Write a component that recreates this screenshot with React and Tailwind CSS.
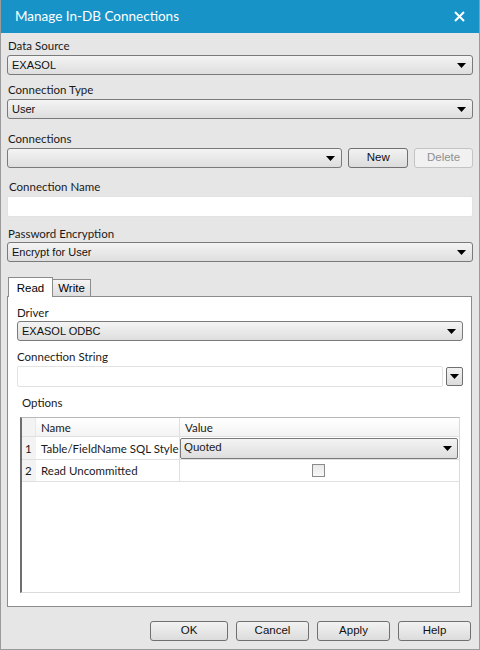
import React from "react";

const SEGOE = "font-['Lato','Open_Sans',sans-serif]";
const MS = "font-['Liberation_Sans',Arial,sans-serif]";

function Arrow() {
  return (
    <svg width="9" height="5" viewBox="0 0 9 5" className="shrink-0">
      <path d="M0 0 H9 L4.5 5 Z" fill="#000" />
    </svg>
  );
}

function Select({ value, className = "" }) {
  return (
    <div
      className={`h-[20px] flex items-center justify-between pl-[4px] pr-[6px] rounded-[3px] border border-[#7a7a7a] bg-[linear-gradient(#f4f4f4,#dedede)] text-[11px] text-[#111] ${MS} ${className}`}
    >
      <span className="leading-[14px]">{value}</span>
      <Arrow />
    </div>
  );
}

function Label({ children, className = "" }) {
  return (
    <div className={`h-[16px] leading-[16px] text-[11.5px] text-[#1a1a1a] ${SEGOE} ${className}`}>
      {children}
    </div>
  );
}

function Button({ children, className = "", disabled }) {
  return (
    <div
      className={`h-[20px] flex items-center justify-center rounded-[3px] border text-[11.5px] ${MS} ${
        disabled
          ? "border-[#c4c4c4] bg-[#f1f1f1] text-[#8f8f8f]"
          : "border-[#707070] bg-[linear-gradient(#f2f2f2,#dcdcdc)] text-[#111]"
      } ${className}`}
    >
      {children}
    </div>
  );
}

export default function App() {
  return (
    <div className="w-[480px] h-[650px] bg-[#e6e6e6] border border-[#9a9a9a] border-t-0 flex flex-col overflow-hidden">
      <div className="h-[33px] shrink-0 bg-[#1793c8] flex items-center justify-between pl-[15px] pr-[15px] -mx-px">
        <span className={`text-[13.5px] text-white ${SEGOE}`}>Manage In-DB Connections</span>
        <svg width="11" height="11" viewBox="0 0 11 11">
          <path d="M1 1 L10 10 M10 1 L1 10" stroke="#fff" strokeWidth="2" />
        </svg>
      </div>
      <div className="px-[6px] flex flex-col">
        <Label className="mt-[5px] pl-[1px]">Data Source</Label>
        <Select value="EXASOL" className="mt-[1px]" />
        <Label className="mt-[7px] pl-[1px]">Connection Type</Label>
        <Select value="User" className="mt-[1px]" />
        <Label className="mt-[12px] pl-[1px]">Connections</Label>
        <div className="mt-[1px] flex items-center">
          <Select value="" className="w-[336px]" />
          <Button className="ml-[6px] w-[60px]">New</Button>
          <Button className="ml-[6px] w-[59px]" disabled>Delete</Button>
        </div>
        <Label className="mt-[11px] pl-[2px]">Connection Name</Label>
        <div className="mt-[1px] h-[21px] bg-white border border-[#e2e2e2] rounded-[2px]" />
        <Label className="mt-[9px] pl-[1px]">Password Encryption</Label>
        <Select value="Encrypt for User" className="mt-[0px]" />

        <div className="mt-[15px] flex items-end h-[19px] pl-[1px] relative z-10">
          <div className={`h-[20px] w-[45px] bg-white border border-[#8c8c8c] border-b-0 flex items-start justify-center pt-[2px] text-[11.5px] ${MS} -mb-px`}>
            Read
          </div>
          <div className={`h-[17px] w-[39px] -ml-px bg-[linear-gradient(#f4f4f4,#dedede)] border border-[#8c8c8c] border-b-0 flex items-center justify-center pt-[2px] text-[11.5px] ${MS}`}>
            Write
          </div>
        </div>
        <div className="h-[311px] w-[465px] bg-white border border-[#8c8c8c] flex flex-col pl-[9px] pr-[8px]">
          <Label className="mt-[8px]">Driver</Label>
          <Select value="EXASOL ODBC" className="mt-[0px]" />
          <Label className="mt-[8px]">Connection String</Label>
          <div className="mt-[1px] flex items-start">
            <div className="h-[21px] w-[426px] bg-white border border-[#e2e2e2] rounded-[2px]" />
            <div className="ml-[3px] mt-[1px] w-[17px] h-[19px] rounded-[2px] border border-[#707070] bg-[linear-gradient(#f2f2f2,#dcdcdc)] flex items-center justify-center">
              <Arrow />
            </div>
          </div>
          <Label className="mt-[8px] pl-[5px]">Options</Label>
          <div className="mt-[6px] ml-[3px] w-[440px] h-[176px] border border-[#dadada] border-l-[#6e6e6e] border-t-[#b8b8b8] border-l-2 bg-white flex flex-col">
            <div className={`h-[19px] flex text-[11.5px] text-[#1a1a1a] ${SEGOE} bg-[linear-gradient(#ffffff,#f3f3f3)] border-b border-[#e0e0e0]`}>
              <div className="w-[14px] bg-[#f3f3f3] border-r border-[#e8e8e8]" />
              <div className="w-[144px] pl-[5px] leading-[19px] border-r border-[#e0e0e0]">Name</div>
              <div className="flex-1 pl-[5px] leading-[19px]">Value</div>
            </div>
            <div className={`h-[23px] flex text-[11.5px] text-[#1a1a1a] ${SEGOE} border-b border-[#e0e0e0]`}>
              <div className="w-[14px] bg-[#f3f3f3] pl-[3px] leading-[23px]">1</div>
              <div className="w-[144px] pl-[5px] leading-[23px] border-r border-[#e0e0e0] whitespace-nowrap overflow-hidden">Table/FieldName SQL Style</div>
              <div className="flex-1 flex items-center pr-[1px]">
                <div className="w-full h-[21px] flex items-center justify-between pl-[3px] pr-[5px] rounded-[2px] border border-[#7a7a7a] bg-[linear-gradient(#f4f4f4,#dedede)]">
                  <span className={`text-[11.5px] ${MS}`}>Quoted</span>
                  <Arrow />
                </div>
              </div>
            </div>
            <div className={`h-[22px] flex text-[11.5px] text-[#1a1a1a] ${SEGOE} border-b border-[#e0e0e0]`}>
              <div className="w-[14px] bg-[#f3f3f3] pl-[3px] leading-[22px]">2</div>
              <div className="w-[144px] pl-[5px] leading-[22px] border-r border-[#e0e0e0]">Read Uncommitted</div>
              <div className="flex-1 flex items-center justify-center pr-[2px]">
                <div className="w-[13px] h-[13px] border border-[#8a8a8a] bg-[linear-gradient(#e8e8e8,#f8f8f8)]" />
              </div>
            </div>
          </div>
        </div>
        <div className="mt-[14px] flex justify-end pr-[2px]">
          <Button className="w-[78px]">OK</Button>
          <Button className="ml-[8px] w-[73px]">Cancel</Button>
          <Button className="ml-[8px] w-[73px]">Apply</Button>
          <Button className="ml-[8px] w-[73px]">Help</Button>
        </div>
      </div>
    </div>
  );
}
